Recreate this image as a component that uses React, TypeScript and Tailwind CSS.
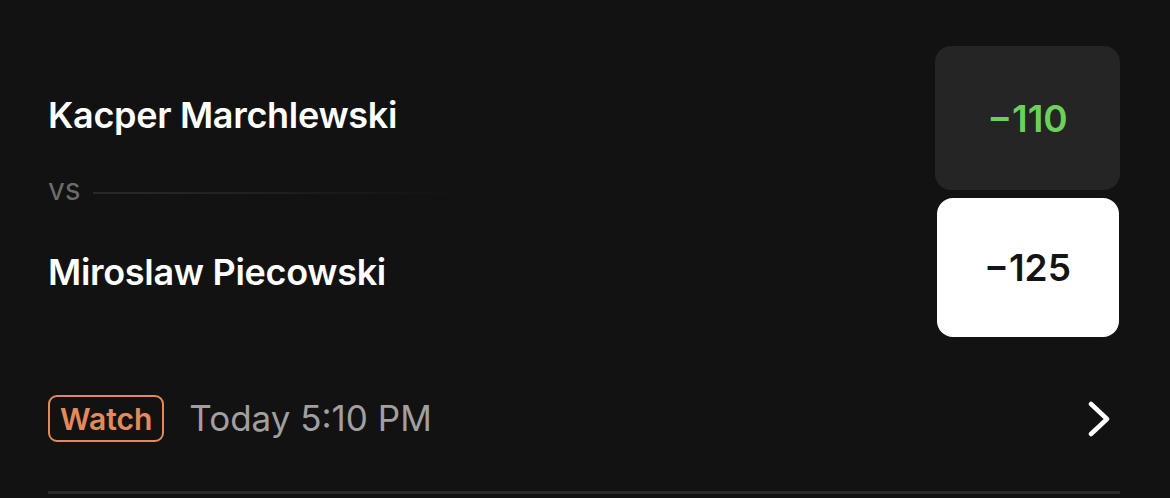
import React from "react";

export default function App() {
  return (
    <div
      className="w-[1170px] h-[498px] bg-[#121212] pl-12 pr-[50px] pt-[46px] overflow-hidden"
      style={{ fontFamily: "Inter, 'Noto Sans', sans-serif" }}
    >
      <div className="flex">
        <div className="flex-1 flex flex-col">
          <div className="mt-[51px] text-[36px] leading-none font-semibold text-white tracking-[-0.3px]">
            Kacper Marchlewski
          </div>
          <div className="mt-[41px] flex items-center gap-[12px]">
            <span className="text-[30px] leading-none text-[#6b6b6b]">vs</span>
            <div className="h-[2px] w-[370px] bg-gradient-to-r from-[#2a2a2a] to-transparent mt-[8px]" />
          </div>
          <div className="mt-[50px] text-[36px] leading-none font-semibold text-white tracking-[-0.3px]">
            Miroslaw Piecowski
          </div>
        </div>
        <div className="w-[185px] flex flex-col items-center gap-2">
          <div className="w-[185px] h-[144px] rounded-2xl bg-[#252525] flex items-center justify-center">
            <span className="text-[37px] font-semibold text-[#6cd15a] leading-none">−110</span>
          </div>
          <div className="w-[182px] h-[139px] rounded-2xl bg-white flex items-center justify-center">
            <span className="text-[37px] font-semibold text-[#141414] leading-none">−125</span>
          </div>
        </div>
      </div>
      <div className="mt-[58px] h-[47px] flex items-center">
        <div className="h-[47px] px-[10px] rounded-[9px] border-2 border-[#e38a5c] flex items-center">
          <span className="text-[30px] font-semibold text-[#e38a5c] leading-none">Watch</span>
        </div>
        <span className="ml-[25px] text-[35px] text-[#a0a0a0] leading-none">Today 5:10 PM</span>
        <div className="flex-1" />
        <svg width="22" height="36" viewBox="0 0 22 36" className="mr-[10px]">
          <polyline
            points="3,3 19,18 3,33"
            fill="none"
            stroke="#ffffff"
            strokeWidth="4.5"
            strokeLinecap="round"
            strokeLinejoin="round"
          />
        </svg>
      </div>
      <div className="mt-[49px] h-[3px] bg-[#2a2a2a]" />
    </div>
  );
}
